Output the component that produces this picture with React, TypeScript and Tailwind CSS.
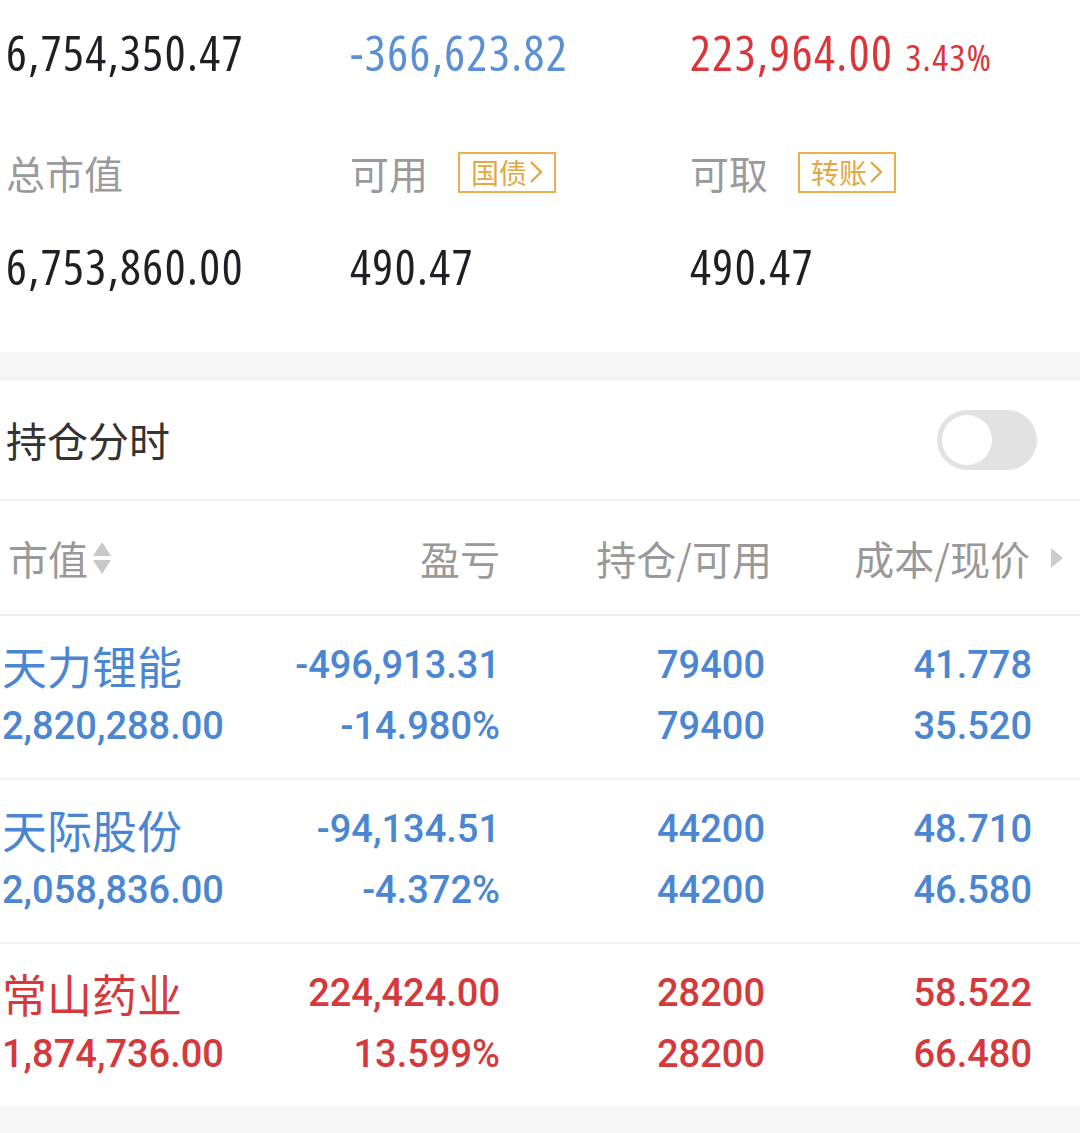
import React from 'react';

const BLUE = 'text-[#4a86d2]';
const RED = 'text-[#d4393b]';

const cjk = "font-['Noto_Sans_CJK_SC',sans-serif]";
const num = "font-['Roboto','Noto_Sans_CJK_SC',sans-serif] font-medium";
const narrow = "font-['Open_Sans','Roboto',sans-serif] font-stretch-condensed font-medium leading-none tracking-[1.5px]";

interface Holding {
  name: string;
  value: string;
  pnl: string;
  pct: string;
  pos: string;
  avail: string;
  cost: string;
  price: string;
  up: boolean;
}

const holdings: Holding[] = [
  { name: '天力锂能', value: '2,820,288.00', pnl: '-496,913.31', pct: '-14.980%', pos: '79400', avail: '79400', cost: '41.778', price: '35.520', up: false },
  { name: '天际股份', value: '2,058,836.00', pnl: '-94,134.51', pct: '-4.372%', pos: '44200', avail: '44200', cost: '48.710', price: '46.580', up: false },
  { name: '常山药业', value: '1,874,736.00', pnl: '224,424.00', pct: '13.599%', pos: '28200', avail: '28200', cost: '58.522', price: '66.480', up: true },
];

function Badge({ label }: { label: string }) {
  return (
    <span className={`ml-[30px] inline-flex h-[41px] items-center border-2 border-[#ebb04c] px-[11px] text-[28px] leading-none text-[#e3a744] ${cjk}`}>
      {label}
      <svg width="14" height="24" viewBox="0 0 14 24" className="ml-[2px]">
        <path d="M2 2 L12 12 L2 22" fill="none" stroke="#e3a744" strokeWidth="2.4" />
      </svg>
    </span>
  );
}

function SortIcon() {
  return (
    <svg width="22" height="36" viewBox="0 0 22 36" className="ml-[3px]">
      <path d="M11 2 L20 16 L2 16 Z" fill="#c8c8c8" />
      <path d="M2 20 L20 20 L11 34 Z" fill="#c8c8c8" />
    </svg>
  );
}

function Row({ h, last }: { h: Holding; last?: boolean }) {
  const c = h.up ? RED : BLUE;
  return (
    <div className={`grid grid-cols-[268px_230px_265px_267px] pl-[2px] pt-[19px] pb-[21px] ${last ? '' : 'border-b-2 border-[#f2f2f2]'}`}>
      <div className={`${c} leading-[61px]`}>
        <div className={`${cjk} text-[45px]`}>{h.name}</div>
        <div className={`${num} text-[38px]`}>{h.value}</div>
      </div>
      <div className={`${c} ${num} text-[38px] leading-[61px] text-right`}>
        <div>{h.pnl}</div>
        <div>{h.pct}</div>
      </div>
      <div className={`${c} ${num} text-[38px] leading-[61px] text-right`}>
        <div>{h.pos}</div>
        <div>{h.avail}</div>
      </div>
      <div className={`${c} ${num} text-[38px] leading-[61px] text-right`}>
        <div>{h.cost}</div>
        <div>{h.price}</div>
      </div>
    </div>
  );
}

export default function App() {
  return (
    <div className="w-[1080px] h-[1133px] overflow-hidden bg-white">
      {/* account summary */}
      <div className="h-[352px] pl-[6px]">
        <div className="grid h-[104px] grid-cols-[344px_340px_1fr] items-center">
          <div className={`${narrow} text-[49px] text-[#1e1f24]`}>6,754,350.47</div>
          <div className={`${narrow} text-[49px] text-[#5a8fd6]`}>-366,623.82</div>
          <div className={`${narrow} flex items-baseline text-[#d9363c]`}>
            <span className="text-[49px]">223,964.00</span>
            <span className="ml-[12px] text-[37px]">3.43%</span>
          </div>
        </div>
        <div className="grid h-[136px] grid-cols-[344px_340px_1fr] items-center">
          <div className={`${cjk} text-[39px] text-[#9a9a9a]`}>总市值</div>
          <div className={`flex items-center ${cjk} text-[39px] text-[#9a9a9a]`}>
            可用
            <Badge label="国债" />
          </div>
          <div className={`flex items-center ${cjk} text-[39px] text-[#9a9a9a]`}>
            可取
            <Badge label="转账" />
          </div>
        </div>
        <div className="grid h-[52px] grid-cols-[344px_340px_1fr] items-center">
          <div className={`${narrow} text-[49px] text-[#1e1f24]`}>6,753,860.00</div>
          <div className={`${narrow} text-[49px] text-[#1e1f24]`}>490.47</div>
          <div className={`${narrow} text-[49px] text-[#1e1f24]`}>490.47</div>
        </div>
      </div>

      <div className="h-[28px] bg-[#f5f5f5] border-b border-[#ececec]" />

      {/* intraday toggle */}
      <div className="flex h-[121px] items-center justify-between border-b-2 border-[#f0f0f0] pl-[6px] pr-[43px]">
        <span className={`${cjk} text-[41px] text-[#333333]`}>持仓分时</span>
        <div className="flex h-[60px] w-[100px] items-center rounded-full bg-[#e2e2e2] pl-[5px]">
          <div className="h-[50px] w-[50px] rounded-full bg-white" />
        </div>
      </div>

      {/* table header */}
      <div className={`grid h-[115px] grid-cols-[262px_230px_272px_258px_1fr] items-center border-b-2 border-[#ebebeb] pl-[8px] ${cjk} text-[40px] text-[#999999]`}>
        <div className="flex items-center">
          市值
          <SortIcon />
        </div>
        <div className="text-right">盈亏</div>
        <div className="text-right">持仓/可用</div>
        <div className="text-right">成本/现价</div>
        <div className="flex justify-end pr-[16px]">
          <svg width="14" height="22" viewBox="0 0 14 22">
            <path d="M1 1 L13 11 L1 21 Z" fill="#cccccc" />
          </svg>
        </div>
      </div>

      {holdings.map((h, i) => (
        <Row key={h.name} h={h} last={i === holdings.length - 1} />
      ))}

      <div className="h-[30px] bg-[#f5f5f5]" />
    </div>
  );
}
